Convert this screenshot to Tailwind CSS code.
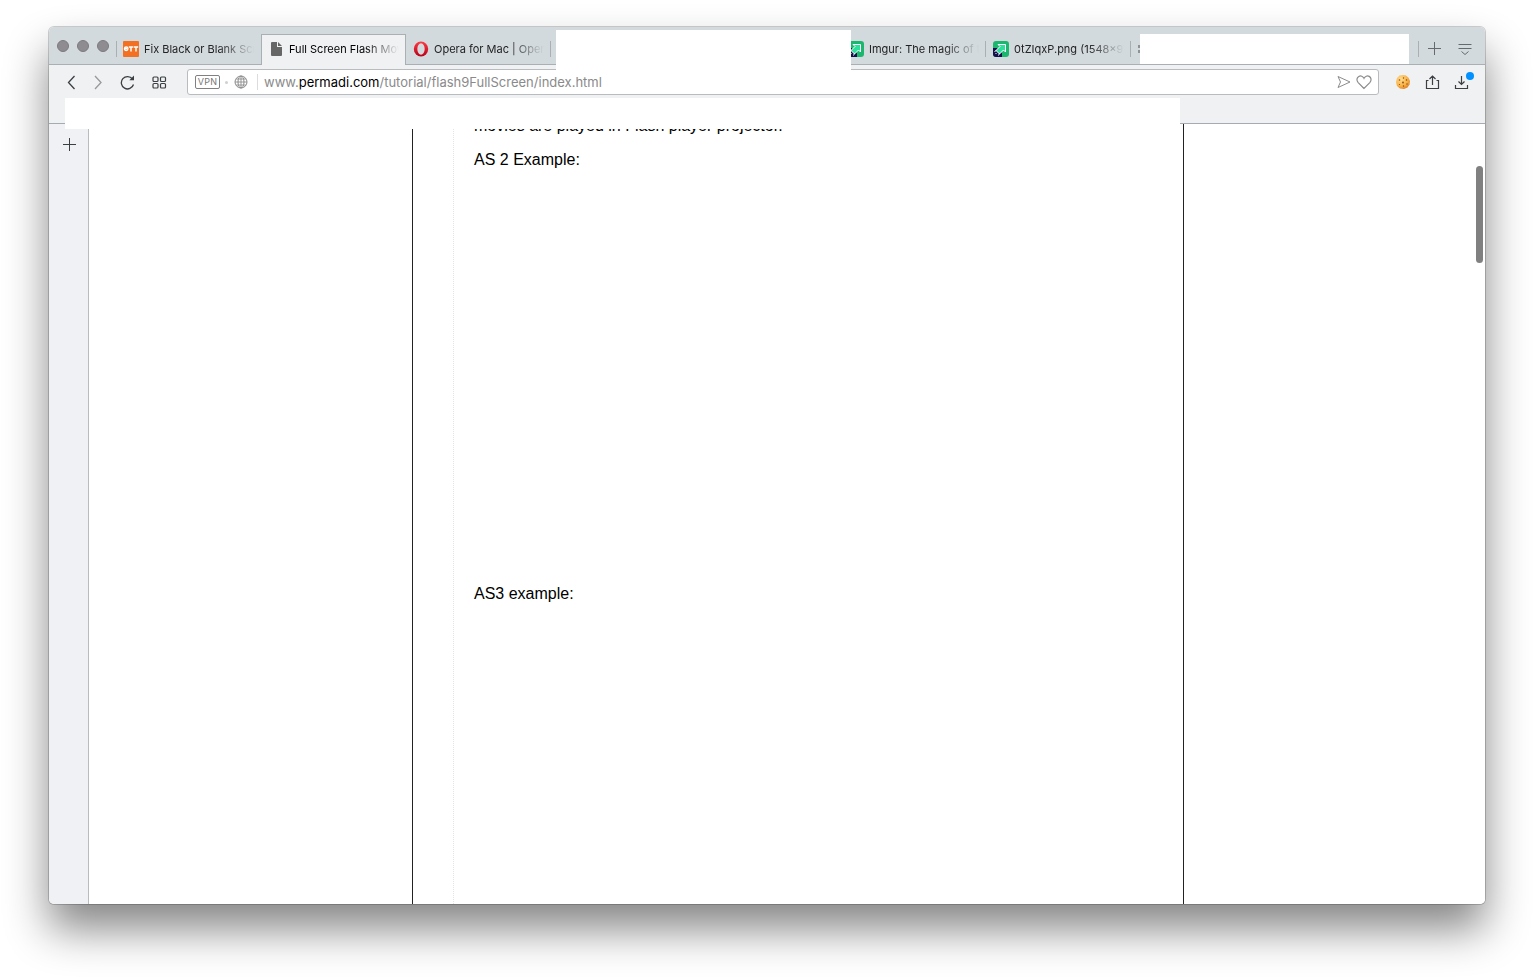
<!DOCTYPE html>
<html lang="en">
<head>
    <meta charset="UTF-8">
    <meta name="viewport" content="width=device-width, initial-scale=1.0">
    <title>Full Screen Flash Movie</title>
    <script src="https://cdn.jsdelivr.net/npm/@tailwindcss/browser@4"></script>
</head>
<body class="flex h-screen flex-col overflow-hidden bg-white pt-[27px] pr-12 pb-[74px] pl-[49px] font-['Inter',sans-serif]">
    <div class="relative flex min-h-0 flex-1 flex-col rounded-[5px] shadow-[0_0_0_1px_rgba(0,0,0,0.18),0_25px_44px_rgba(0,0,0,0.48)]">

        <!-- Tab strip -->
        <header class="flex h-[38px] shrink-0 rounded-t-[5px] border-b border-[#a9afb3] bg-[#d3dadd]">
            <div class="flex w-[67px] shrink-0 gap-2 pt-[13px] pl-2">
                <button aria-label="Close" class="size-3 rounded-full border border-[#7b7b7e] bg-[#8e8c91]"></button>
                <button aria-label="Minimize" class="size-3 rounded-full border border-[#7b7b7e] bg-[#8e8c91]"></button>
                <button aria-label="Zoom" class="size-3 rounded-full border border-[#7b7b7e] bg-[#8e8c91]"></button>
            </div>
            <nav class="flex min-w-0 flex-1 overflow-hidden pt-[7px] -mb-px text-[11px] leading-6 text-[#222]">
                <button class="flex w-[145px] shrink-0 items-center pb-0.5">
                    <span class="h-4 w-px bg-[#a9afb3]"></span>
                    <svg class="mr-[5px] ml-1.5 size-4 shrink-0" viewBox="0 0 16 16"><rect width="16" height="16" rx="1" fill="#f36f21"/><circle cx="3.2" cy="7.8" r="1.8" fill="none" stroke="#fff" stroke-width="1.3"/><path d="M2 7.8h2.4M5.8 6h4.4M8 6v4.5M10.8 6h4.4M13 6v4.5" stroke="#fff" stroke-width="1.5"/></svg>
                    <span class="w-[110px] overflow-hidden text-left whitespace-nowrap [mask-image:linear-gradient(to_right,black_75px,transparent_110px)]">Fix Black or Blank Screen</span>
                </button>
                <button class="flex w-[145px] shrink-0 items-center border border-b-0 border-[#a9afb3] bg-[#eff1f3] pb-[3px] text-black">
                    <svg class="mr-[5px] ml-1.5 size-4 shrink-0" viewBox="0 0 16 16"><path d="M4 1h5v5h5v8a1 1 0 0 1-1 1H4a1 1 0 0 1-1-1V2a1 1 0 0 1 1-1z" fill="#666"/><path d="M10 1l4 4h-4z" fill="#666"/></svg>
                    <span class="w-[110px] overflow-hidden text-left whitespace-nowrap [mask-image:linear-gradient(to_right,black_75px,transparent_110px)]">Full Screen Flash Movie</span>
                </button>
                <button class="mr-[290px] flex w-[145px] shrink-0 items-center pb-0.5">
                    <svg class="mr-[5px] ml-[7px] size-4 shrink-0" viewBox="0 0 16 16"><defs><linearGradient id="red" x2="0" y2="1"><stop stop-color="#ff3b45"/><stop offset="1" stop-color="#b80018"/></linearGradient></defs><ellipse cx="8" cy="8" rx="7.200" ry="7.500" fill="url(#red)"/><ellipse cx="8" cy="8" rx="3.700" ry="5.700" fill="#d3dadd"/></svg>
                    <span class="w-[110px] overflow-hidden text-left whitespace-nowrap [mask-image:linear-gradient(to_right,black_75px,transparent_110px)]">Opera for Mac | Opera</span>
                    <span class="ml-1.5 h-4 w-px shrink-0 bg-[#a9afb3]"></span>
                </button>
                <button class="flex w-[145px] shrink-0 items-center pb-0.5">
                    <svg class="mr-[5px] ml-[7px] size-4 shrink-0" viewBox="0 0 16 16"><rect width="16" height="16" rx="3" fill="#1bb76e"/><path d="M0 7l4 0 5 5 0 4H3a3 3 0 0 1-3-3z" fill="#14104d"/><path d="M5 3.500h7.500V11L10.500 9 6.500 13 3 9.500 7 5.500z" fill="#2be09b" stroke="#fff"/><path d="M3.500 9.500l-2 1M6.500 12.500l-1 2M3.500 12l-1 1" stroke="#fff"/></svg>
                    <span class="w-[110px] overflow-hidden text-left whitespace-nowrap [mask-image:linear-gradient(to_right,black_75px,transparent_110px)]">Imgur: The magic of the</span>
                    <span class="ml-1.5 h-4 w-px shrink-0 bg-[#a9afb3]"></span>
                </button>
                <button class="flex w-[145px] shrink-0 items-center pb-0.5">
                    <svg class="mr-[5px] ml-[7px] size-4 shrink-0" viewBox="0 0 16 16"><rect width="16" height="16" rx="3" fill="#1bb76e"/><path d="M0 7l4 0 5 5 0 4H3a3 3 0 0 1-3-3z" fill="#14104d"/><path d="M5 3.500h7.500V11L10.500 9 6.500 13 3 9.500 7 5.500z" fill="#2be09b" stroke="#fff"/><path d="M3.500 9.500l-2 1M6.500 12.500l-1 2M3.500 12l-1 1" stroke="#fff"/></svg>
                    <span class="w-[110px] overflow-hidden text-left whitespace-nowrap [mask-image:linear-gradient(to_right,black_75px,transparent_110px)]">0tZIqxP.png (1548×978)</span>
                    <span class="ml-1.5 h-4 w-px shrink-0 bg-[#a9afb3]"></span>
                </button>
                <button aria-label="Tab" class="flex flex-1 items-center pb-0.5">
                    <svg class="ml-1.5 size-4 shrink-0" viewBox="0 0 16 16"><path d="M1 4h3v3H1zM1 9h3v3H1z" fill="#8d9295"/></svg>
                </button>
            </nav>
            <div class="flex w-[67px] shrink-0 items-center pt-[7px]">
                <span class="h-4 w-px bg-[#a9afb3]"></span>
                <button aria-label="New tab" class="ml-[9px]"><svg class="size-[14px]" viewBox="0 0 14 14" fill="none" stroke="#666a6d"><path d="M0 6.500h13M6.500 0v13"/></svg></button>
                <button aria-label="Tab menu" class="ml-4"><svg class="size-[14px]" viewBox="0 0 14 14" fill="none" stroke="#666a6d"><path d="M.5 2.500h13M.5 6.500h13M3.500 9.500l3.500 3 3.500-3"/></svg></button>
            </div>
        </header>

        <!-- Toolbar -->
        <div class="flex h-[59px] shrink-0 items-start border-b border-[#a6abb1] bg-[#eff1f3] pt-1">
            <div class="flex h-[26px] w-[138px] shrink-0 items-center pl-4">
                <button aria-label="Back"><svg class="size-4" viewBox="0 0 16 16" fill="none" stroke="#3c3f42" stroke-width="1.300"><path d="M9.500 2l-6 6.500 6 6.500"/></svg></button>
                <button aria-label="Forward" class="ml-[9px]"><svg class="size-4" viewBox="0 0 16 16" fill="none" stroke="#97999b" stroke-width="1.300"><path d="M5 2l6 6.500L5 15"/></svg></button>
                <button aria-label="Reload" class="ml-[13px]"><svg class="size-4" viewBox="0 0 16 16" fill="none" stroke="#3c3f42" stroke-width="1.300"><path d="M14.500 10.500A6.200 6.200 0 1 1 13.500 5"/><path d="M15 1.500v4.700h-4.700z" fill="#3c3f42" stroke="none"/></svg></button>
                <button aria-label="Speed dial" class="ml-4"><svg class="size-4" viewBox="0 0 16 16" fill="none" stroke="#3c3f42" stroke-width="1.200"><rect x="2" y="3" width="5" height="4.500" rx="1"/><rect x="9.500" y="3" width="5" height="4.500" rx="1"/><rect x="2" y="9.500" width="5" height="4.500" rx="1"/><rect x="9.500" y="9.500" width="5" height="4.500" rx="1"/></svg></button>
            </div>
            <div class="flex h-[26px] min-w-0 flex-1 items-center rounded-[3px] border border-[#b8bcbf] bg-white pl-[7px] text-[13px]">
                <button class="h-[14px] w-[25px] rounded-[2px] border border-[#808080] text-center text-[9px] leading-3 tracking-wide text-[#777]">VPN</button>
                <span class="ml-[5px] size-[3px] rounded-full bg-[#d0d0d0]"></span>
                <svg class="ml-[6px] size-[14px]" viewBox="0 0 14 14" fill="none" stroke="#8c8c8c"><circle cx="7" cy="7" r="6"/><ellipse cx="7" cy="7" rx="3" ry="6"/><path d="M7 1v12M1 7h12M2 4h10M2 10h10" stroke-width=".9"/></svg>
                <span class="ml-[9px] h-4 w-px bg-[#dcdcdc]"></span>
                <a href="#" aria-label="Page address" class="ml-1.5 pt-0.5 whitespace-nowrap text-[#8a8a8a]">www.<span class="text-black">permadi.com</span>/tutorial/flash9FullScreen/index.html</a>
                <button aria-label="Send" class="ml-auto"><svg class="size-4" viewBox="0 0 16 16" fill="none" stroke="#8c8c8c"><path d="M2 2.500L14 8 2 13.500 4.500 8z"/></svg></button>
                <button aria-label="Bookmark" class="mr-1.5 ml-1"><svg class="size-4" viewBox="0 0 16 16" fill="none" stroke="#8c8c8c" stroke-width="1.200"><path d="M8 14.500L2.200 8.600C.2 6.400.7 3.600 2.800 2.400 4.800 1.300 7 2.300 8 4.300c1-2 3.200-3 5.200-1.900 2.100 1.200 2.600 4 .6 6.200z"/></svg></button>
            </div>
            <div class="flex h-[26px] w-[106px] shrink-0 items-center pl-4">
                <button aria-label="Cookies"><svg class="size-4" viewBox="0 0 16 16"><defs><radialGradient id="cookie" cx=".35" cy=".3" r=".8"><stop stop-color="#ffdc90"/><stop offset=".6" stop-color="#f9b245"/><stop offset="1" stop-color="#dc7a20"/></radialGradient></defs><path d="M8 1l3 .5 2.500 2.200L15 7l-.5 3.500-2 3L9 15l-4-.5-3-2.500L1 8l1-4 2.500-2.500z" fill="url(#cookie)"/><g fill="#8f4a14"><circle cx="4.500" cy="6" r=".8"/><circle cx="8.500" cy="4" r=".7"/><circle cx="11.500" cy="6" r=".8"/><circle cx="8" cy="8.500" r=".9"/><circle cx="4.500" cy="10.500" r=".6"/><circle cx="8.500" cy="12" r=".7"/><circle cx="12" cy="10" r=".7"/></g></svg></button>
                <button aria-label="Share" class="ml-[13px]"><svg class="size-4" viewBox="0 0 16 16" fill="none" stroke="#3c3f42" stroke-width="1.200"><path d="M4.500 6.500h-2v8h12v-8h-2M8.500 11V2M5.500 5l3-3 3 3"/></svg></button>
                <button aria-label="Downloads" class="relative ml-[13px]">
                    <svg class="size-4" viewBox="0 0 16 16" fill="none" stroke="#3c3f42" stroke-width="1.200"><path d="M2.500 11v3.500h12V11M8.500 2v8.500M5.500 7.500l3 3 3-3"/></svg>
                    <span class="absolute -top-[2px] -right-[5px] size-2 rounded-full bg-[#0090ff]"></span>
                </button>
            </div>
        </div>

        <div class="flex min-h-0 flex-1">
            <!-- Sidebar -->
            <aside class="w-10 shrink-0 rounded-bl-[5px] border-r border-[#b9bcbf] bg-[#eff1f4] pt-[14px] pl-[14px]">
                <button aria-label="Add panel" class="block"><svg class="size-[14px]" viewBox="0 0 14 14" fill="none" stroke="#3c3f42"><path d="M0 6.500h13M6.500 0v13"/></svg></button>
            </aside>

            <!-- Page -->
            <main class="flex min-w-0 flex-1 overflow-hidden rounded-br-[5px] bg-white pl-[22px]">
                <article class="mx-auto flex w-[772px] border-x border-[#222] pl-10 font-['Liberation_Sans',sans-serif] text-base leading-[18px] text-black">
                    <div class="border-l border-dotted border-[#e4e4e4] pl-5">
                        <p class="-mt-[7px]">movies are played in Flash player projector.</p>
                        <p class="mt-4">AS 2 Example:</p>
                        <p class="mt-[416px]">AS3 example:</p>
                    </div>
                </article>
            </main>
        </div>

        <!-- Scroll thumb -->
        <div class="absolute top-[139px] right-[2px] h-[97px] w-[7px] rounded-full bg-[#808080]"></div>

        <!-- Blanked-out areas -->
        <div class="absolute top-[3px] left-[507px] h-10 w-[295px] bg-white"></div>
        <div class="absolute top-[7px] left-[1091px] h-[30px] w-[269px] bg-white"></div>
        <div class="absolute top-[71px] left-4 h-[31px] w-[1115px] bg-white"></div>
    </div>
</body>
</html>
